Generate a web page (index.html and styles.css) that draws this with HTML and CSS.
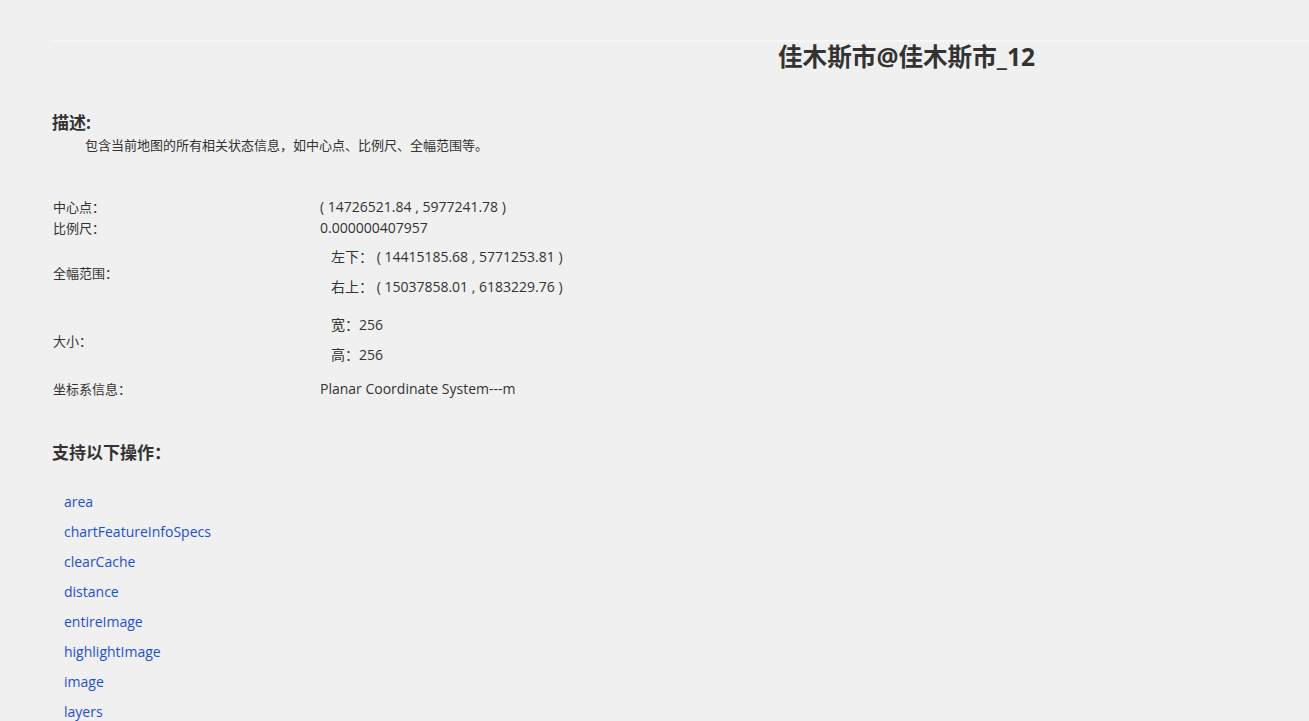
FILE: index.html
```html
<!DOCTYPE html>
<html lang="zh-CN">
<head>
<meta charset="utf-8">
<title>佳木斯市@佳木斯市_12</title>
<link rel="stylesheet" href="styles.css">
</head>
<body>
<div class="page">
  <div class="header"><h1 class="title">佳木斯市@佳木斯市_12</h1></div>

  <h3 class="section-title desc-title">描述:</h3>
  <p class="desc">包含当前地图的所有相关状态信息，如中心点、比例尺、全幅范围等。</p>

  <div class="info">
    <div class="row row-single">
      <div class="label">中心点：</div>
      <div class="value">( 14726521.84 , 5977241.78 )</div>
    </div>
    <div class="row row-single">
      <div class="label">比例尺：</div>
      <div class="value">0.000000407957</div>
    </div>
    <div class="row row-multi">
      <div class="label">全幅范围：</div>
      <div class="value sub">
        <div class="sub-line">左下：&nbsp;( 14415185.68 , 5771253.81 )</div>
        <div class="sub-line">右上：&nbsp;( 15037858.01 , 6183229.76 )</div>
      </div>
    </div>
    <div class="row row-multi">
      <div class="label">大小：</div>
      <div class="value sub">
        <div class="sub-line">宽：256</div>
        <div class="sub-line">高：256</div>
      </div>
    </div>
    <div class="row row-last">
      <div class="label">坐标系信息：</div>
      <div class="value">Planar Coordinate System---m</div>
    </div>
  </div>

  <h3 class="section-title ops-title">支持以下操作：</h3>
  <ul class="ops">
    <li><a href="#">area</a></li>
    <li><a href="#">chartFeatureInfoSpecs</a></li>
    <li><a href="#">clearCache</a></li>
    <li><a href="#">distance</a></li>
    <li><a href="#">entireImage</a></li>
    <li><a href="#">highlightImage</a></li>
    <li><a href="#">image</a></li>
    <li><a href="#">layers</a></li>
  </ul>
</div>
</body>
</html>
```
FILE: styles.css
```css
html, body {
  margin: 0;
  padding: 0;
  background: #f0f0f0;
  color: #333333;
  font-family: "Open Sans", "Noto Sans CJK SC", sans-serif;
}

.page {
  margin: 40px 0 0 50px;
  border-top: 2px solid #f6f6f6;
}

.header {
  padding-left: 728px;
}

.title {
  margin: 0;
  font-size: 24.6px;
  line-height: 30px;
  font-weight: bold;
  color: #333333;
}

.section-title {
  margin: 0;
  padding-left: 2px;
  font-size: 17px;
  line-height: 24px;
  font-weight: bold;
  color: #333333;
}

.desc-title {
  margin-top: 39px;
}

.desc {
  margin: 0;
  padding-left: 35px;
  font-size: 13px;
  line-height: 20px;
}

.info {
  margin-top: 41px;
  padding-left: 3px;
}

.row {
  display: flex;
  align-items: center;
}

.row-single {
  height: 21px;
}

.row-multi {
  padding: 4px 0;
}

.row-last {
  height: 29px;
}

.label {
  width: 267px;
  font-size: 13px;
}

.value {
  font-size: 14px;
}

.sub {
  padding-left: 11px;
}

.sub-line {
  line-height: 30px;
}

.ops-title {
  margin-top: 38px;
}

.ops {
  list-style: none;
  margin: 22px 0 0;
  padding: 0 0 0 14px;
}

.ops li {
  font-size: 14px;
  line-height: 30px;
}

.ops a {
  color: #1a4fd6;
  text-decoration: none;
}
```
